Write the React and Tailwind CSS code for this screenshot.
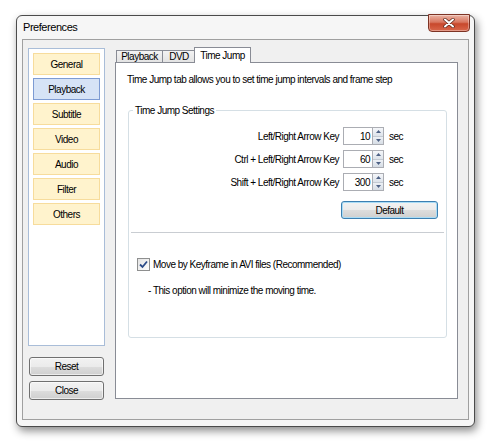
import React from 'react';

const font = "font-['Liberation_Sans',Arial,sans-serif]";

const categories = ['General', 'Playback', 'Subtitle', 'Video', 'Audio', 'Filter', 'Others'];

const jumpKeys = [
  { label: 'Left/Right Arrow Key', value: 10 },
  { label: 'Ctrl + Left/Right Arrow Key', value: 60 },
  { label: 'Shift + Left/Right Arrow Key', value: 300 },
];

const CloseButton = () => (
  <div className="-mt-[2px] flex h-[18px] w-[42px] items-center justify-center rounded-b-[4px] border border-[#7d3324] bg-[linear-gradient(to_bottom,#eab3a4,#d9765f_45%,#c8482c_55%,#d9674b)] shadow-[inset_0_0_0_1px_rgba(255,255,255,0.35)]">
    <svg width="12" height="10" viewBox="0 0 12 10">
      <path d="M2 1.5 L10 8.5 M10 1.5 L2 8.5" stroke="#5a2418" strokeWidth="3.4" strokeLinecap="round" />
      <path d="M2 1.5 L10 8.5 M10 1.5 L2 8.5" stroke="#ffffff" strokeWidth="2" strokeLinecap="round" />
    </svg>
  </div>
);

const SideButton = ({ children }) => (
  <button className="flex h-[19px] w-[75px] items-center justify-center rounded-[3px] border border-[#707070] bg-[linear-gradient(to_bottom,#f2f2f2,#ebebeb_50%,#dddddd_51%,#cfcfcf)] text-black shadow-[inset_0_0_0_1px_rgba(255,255,255,0.6)]">
    {children}
  </button>
);

const SpinBox = ({ value }) => (
  <div className="flex h-[18px] w-[41px]">
    <div className="flex flex-1 items-center justify-end border border-[#abadb3] border-r-0 bg-white pr-[2px]">
      {value}
    </div>
    <div className="flex w-[12px] flex-col border border-[#abadb3]">
      <div className="flex flex-1 items-center justify-center border-b border-[#c3cad3] bg-[linear-gradient(to_bottom,#f5f7fa,#dde3ea)]">
        <svg width="5" height="3" viewBox="0 0 5 3"><path d="M0 3 L2.5 0 L5 3 Z" fill="#4d6185" /></svg>
      </div>
      <div className="flex flex-1 items-center justify-center bg-[linear-gradient(to_bottom,#eef1f5,#d6dde5)]">
        <svg width="5" height="3" viewBox="0 0 5 3"><path d="M0 0 L5 0 L2.5 3 Z" fill="#4d6185" /></svg>
      </div>
    </div>
  </div>
);

const CheckBox = () => (
  <div className="flex h-[13px] w-[13px] shrink-0 items-center justify-center border border-[#8e8f8f] bg-[linear-gradient(135deg,#e4e4e4,#fcfcfc)]">
    <svg width="9" height="9" viewBox="0 0 9 9">
      <path d="M1 4.5 L3.5 7 L8 1.5" stroke="#2a4a87" strokeWidth="1.8" fill="none" />
    </svg>
  </div>
);

export default function App() {
  return (
    <div className={`h-[446px] w-[490px] overflow-hidden bg-white pl-[16px] pt-[15px] text-[10px] tracking-[-0.5px] text-black ${font}`}>
      <div className="flex h-[412px] w-[459px] flex-col rounded-[6px] border border-[#4b4b4b] bg-[#f6f6f6] shadow-[2px_4px_9px_rgba(0,0,0,0.45)]">
        {/* title bar */}
        <div className="flex h-[23px] items-start justify-between pl-[6px] pr-[4px]">
          <span className="mt-[5px] text-[11px] leading-[13px] tracking-[-0.45px]">Preferences</span>
          <CloseButton />
        </div>

        {/* client area */}
        <div className="mx-[5px] mb-[6px] flex flex-1 border border-[#a0a0a0] bg-[#f0f0f0]">
          {/* category list */}
          <div className="ml-[5px] mt-[8px] flex w-[77px] flex-col">
            <div className="flex h-[298px] flex-col gap-[3px] border border-[#a9bdd8] bg-white px-[4px] pt-[4px]">
              {categories.map((name) => (
                <div
                  key={name}
                  className={
                    name === 'Playback'
                      ? 'flex h-[22px] items-center justify-center border border-[#7d9bd3] bg-[#d6e3f6]'
                      : 'flex h-[22px] items-center justify-center border border-[#f7dc9c] bg-[#fff3cd]'
                  }
                >
                  {name}
                </div>
              ))}
            </div>
            <div className="ml-[1px] mt-[11px] flex flex-col gap-[5px]">
              <SideButton>Reset</SideButton>
              <SideButton>Close</SideButton>
            </div>
          </div>

          {/* tab control */}
          <div className="ml-[10px] mt-[6px] flex h-[353px] w-[343px] flex-col">
            <div className="flex h-[16px] items-end pl-[1px]">
              <div className="flex h-[12px] w-[47px] items-center justify-center border border-b-0 border-[#898c95] bg-[linear-gradient(to_bottom,#f3f3f3,#e3e3e3)] leading-[11px]">
                Playback
              </div>
              <div className="-ml-px flex h-[12px] w-[34px] items-center justify-center border border-b-0 border-[#898c95] bg-[linear-gradient(to_bottom,#f3f3f3,#e3e3e3)] leading-[11px]">
                DVD
              </div>
              <div className="relative -mb-px -ml-[2px] flex h-[16px] w-[57px] items-start justify-center border border-b-0 border-[#898c95] bg-white pt-[2px] leading-[11px]">
                Time Jump
              </div>
            </div>

            <div className="flex flex-1 flex-col border border-[#898c95] bg-white">
              <p className="ml-[11px] mt-[10px] leading-[13px]">
                Time Jump tab allows you to set time jump intervals and frame step
              </p>

              <fieldset className="ml-[12px] mr-[10px] mt-[18px] h-[234px] rounded-[3px] border border-[#d5dfe5]">
                <legend className="ml-[4px] px-[2px] leading-[13px]">Time Jump Settings</legend>

                <div className="mt-[10px] flex flex-col gap-[5px] pr-[4px]">
                  {jumpKeys.map((k) => (
                    <div key={k.label} className="flex items-center justify-end">
                      <span>{k.label}</span>
                      <div className="ml-[4px]">
                        <SpinBox value={k.value} />
                      </div>
                      <span className="w-[58px] pl-[5px]">sec</span>
                    </div>
                  ))}
                </div>

                <div className="mr-[8px] mt-[10px] flex justify-end">
                  <button className="flex h-[18px] w-[97px] items-center justify-center rounded-[3px] border border-[#3c7fb1] bg-[linear-gradient(to_bottom,#f2f2f2,#ebebeb_50%,#dddddd_51%,#cfcfcf)] text-black shadow-[inset_0_0_0_1px_#a9dcf6]">
                    Default
                  </button>
                </div>

                <div className="mx-[2px] mt-[13px] border-t border-[#c9cdd2]" />

                <div className="ml-[8px] mt-[24px] flex items-center gap-[3px]">
                  <CheckBox />
                  <span>Move by Keyframe in AVI files (Recommended)</span>
                </div>
                <p className="ml-[19px] mt-[11px]">- This option will minimize the moving time.</p>
              </fieldset>
            </div>
          </div>
        </div>
      </div>
    </div>
  );
}
